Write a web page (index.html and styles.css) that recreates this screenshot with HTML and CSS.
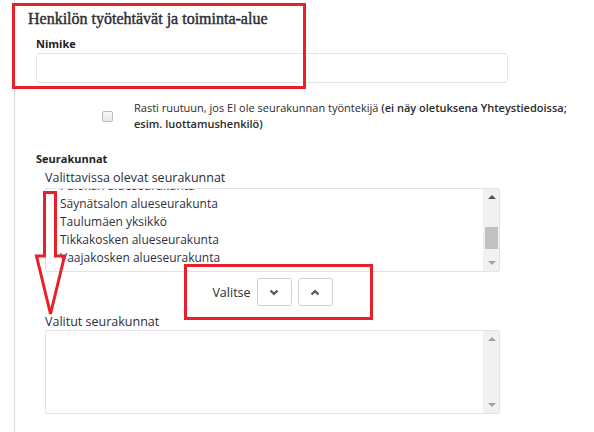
FILE: index.html
```html
<!DOCTYPE html>
<html lang="fi">
<head>
  <meta charset="UTF-8">
  <title>Henkilön työtehtävät</title>
  <link rel="stylesheet" href="styles.css">
</head>
<body>

<div class="panel">

  <h3 class="section-title">Henkilön työtehtävät ja toiminta-alue</h3>

  <div class="field">
    <label class="field-label" for="nimike">Nimike</label>
    <input type="text" id="nimike" class="text-input">
  </div>

  <div class="check-row">
    <span class="checkbox"></span>
    <p class="check-text">Rasti ruutuun, jos EI ole seurakunnan työntekijä <b>(ei näy oletuksena Yhteystiedoissa; esim. luottamushenkilö)</b></p>
  </div>

  <div class="field">
    <div class="field-label">Seurakunnat</div>

    <div class="picker">
      <div class="list-label">Valittavissa olevat seurakunnat</div>
      <div class="listbox">
        <ul class="options scrolled">
          <li>Palokan alueseurakunta</li>
          <li>Säynätsalon alueseurakunta</li>
          <li>Taulumäen yksikkö</li>
          <li>Tikkakosken alueseurakunta</li>
          <li>Vaajakosken alueseurakunta</li>
        </ul>
        <div class="scrollbar">
          <span class="arrow up"></span>
          <span class="thumb"></span>
          <span class="arrow down off"></span>
        </div>
      </div>

      <div class="move-row">
        <span class="move-label">Valitse</span>
        <button class="move-btn" type="button">
          <svg width="10" height="7" viewBox="0 0 10 7"><path d="M1.5 1.5 L5 4.8 L8.5 1.5" fill="none" stroke="#575c70" stroke-width="2.4"/></svg>
        </button>
        <button class="move-btn" type="button">
          <svg width="10" height="7" viewBox="0 0 10 7"><path d="M1.5 5.5 L5 2.2 L8.5 5.5" fill="none" stroke="#575c70" stroke-width="2.4"/></svg>
        </button>
      </div>

      <div class="list-label selected-label">Valitut seurakunnat</div>
      <div class="listbox selected-list">
        <ul class="options"></ul>
        <div class="scrollbar">
          <span class="arrow up off"></span>
          <span class="arrow down off"></span>
        </div>
      </div>
    </div>
  </div>

</div>

<!-- ohjeen merkinnät -->
<div class="mark mark-title"></div>
<div class="mark mark-move"></div>
<svg class="mark-arrow" width="40" height="134" viewBox="33 188 40 134">
  <polygon points="44.5,192.5 55.5,192.5 55.5,256 64.5,256 50.5,314 36.5,256 44.5,256" fill="none" stroke="#e8202a" stroke-width="3"/>
</svg>

</body>
</html>
```

FILE: styles.css
```css
body {
  margin: 0;
  font-family: 'Open Sans', 'Noto Sans', sans-serif;
  color: #333;
  background: #fff;
  position: relative;
  height: 432px;
  overflow: hidden;
}

.panel {
  margin-left: 14px;
  border-left: 1px solid #ddd;
  height: 432px;
  width: 570px;
}

.section-title {
  margin: 0;
  padding: 9px 0 0 13px;
  font-family: 'Liberation Serif', serif;
  font-size: 16px;
  line-height: 20px;
  font-weight: normal;
  -webkit-text-stroke: 0.4px #2b2b33;
  color: #2b2b33;
}

.field {
  padding-left: 21px;
}

.field-label {
  display: block;
  font-size: 11px;
  font-weight: bold;
  line-height: 15px;
  margin-top: 7px;
  color: #222;
}

.text-input {
  display: block;
  box-sizing: border-box;
  margin-top: 2px;
  width: 472px;
  height: 30px;
  border: 1px solid #e4e4ea;
  border-radius: 3px;
}

.check-row {
  display: flex;
  align-items: center;
  margin-top: 17px;
  padding-left: 87px;
}

.checkbox {
  width: 9px;
  height: 9px;
  border: 1px solid #bdbdbd;
  border-radius: 2px;
  background: linear-gradient(#fafafa, #e6e6e6);
  flex: none;
}

.check-text {
  margin: 0 0 0 21px;
  width: 436px;
  font-size: 11px;
  line-height: 16px;
  color: #2a2a2a;
}

.check-text b {
  font-weight: 600;
}

.field + .check-row + .field > .field-label {
  margin-top: 19px;
}

.picker {
  padding-left: 9px;
  width: 455px;
}

.list-label {
  font-size: 12.5px;
  line-height: 16px;
  margin-top: 4px;
  color: #2b2d38;
}

.listbox {
  position: relative;
  height: 84px;
  box-sizing: border-box;
  border: 1px solid #e2e2e8;
  border-radius: 2px;
  overflow: hidden;
  margin-top: 2px;
}

.options {
  list-style: none;
  margin: 0;
  padding: 0 0 0 14px;
  font-size: 12px;
  line-height: 18px;
  color: #2e3140;
}

.options.scrolled {
  margin-top: -12px;
}

.scrollbar {
  position: absolute;
  top: -1px;
  right: -1px;
  bottom: -1px;
  width: 17px;
  background: #f1f1f1;
  display: flex;
  flex-direction: column;
  align-items: center;
}

.arrow {
  width: 0;
  height: 0;
  border-left: 4px solid transparent;
  border-right: 4px solid transparent;
}

.arrow.up {
  border-bottom: 4px solid #505050;
  margin-top: 7px;
}

.arrow.down {
  border-top: 4px solid #505050;
  margin-top: auto;
  margin-bottom: 7px;
}

.arrow.up.off {
  border-bottom-color: #a3a3a3;
}

.arrow.down.off {
  border-top-color: #a3a3a3;
}

.thumb {
  width: 13px;
  height: 22px;
  background: #c1c1c1;
  margin-top: auto;
  margin-bottom: 12px;
}

.scrollbar .thumb + .arrow.down {
  margin-top: 0;
}

.move-row {
  display: flex;
  justify-content: center;
  align-items: center;
  gap: 6px;
  margin-top: 6px;
  height: 28px;
}

.move-label {
  font-size: 12.5px;
  color: #2b2d38;
}

.move-btn {
  width: 35px;
  height: 28px;
  padding: 0;
  border: 1px solid #cfcfd8;
  border-radius: 3px;
  background: #fff;
  display: flex;
  align-items: center;
  justify-content: center;
}

.selected-label {
  margin-top: 8px;
}

.selected-list {
  margin-top: 0;
}

/* ohjeen punaiset merkinnät */
.mark {
  position: absolute;
  border: 3px solid #e8202a;
  box-sizing: border-box;
}

.mark-title {
  left: 12px;
  top: 3px;
  width: 294px;
  height: 86px;
}

.mark-move {
  left: 184px;
  top: 264px;
  width: 189px;
  height: 56px;
}

.mark-arrow {
  position: absolute;
  left: 33px;
  top: 188px;
}
```
